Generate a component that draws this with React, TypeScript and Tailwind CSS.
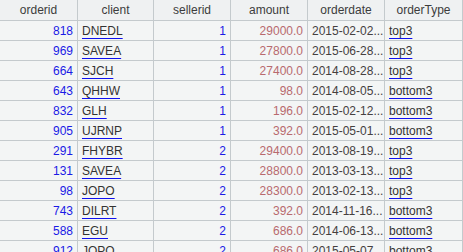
import React from 'react';

type Row = {
  orderid: number;
  client: string;
  sellerid: number;
  amount: string;
  orderdate: string;
  orderType: string;
};

const rows: Row[] = [
  { orderid: 818, client: 'DNEDL', sellerid: 1, amount: '29000.0', orderdate: '2015-02-02...', orderType: 'top3' },
  { orderid: 969, client: 'SAVEA', sellerid: 1, amount: '27800.0', orderdate: '2015-06-28...', orderType: 'top3' },
  { orderid: 664, client: 'SJCH', sellerid: 1, amount: '27400.0', orderdate: '2014-08-28...', orderType: 'top3' },
  { orderid: 643, client: 'QHHW', sellerid: 1, amount: '98.0', orderdate: '2014-08-05...', orderType: 'bottom3' },
  { orderid: 832, client: 'GLH', sellerid: 1, amount: '196.0', orderdate: '2015-02-12...', orderType: 'bottom3' },
  { orderid: 905, client: 'UJRNP', sellerid: 1, amount: '392.0', orderdate: '2015-05-01...', orderType: 'bottom3' },
  { orderid: 291, client: 'FHYBR', sellerid: 2, amount: '29400.0', orderdate: '2013-08-19...', orderType: 'top3' },
  { orderid: 131, client: 'SAVEA', sellerid: 2, amount: '28800.0', orderdate: '2013-03-13...', orderType: 'top3' },
  { orderid: 98, client: 'JOPO', sellerid: 2, amount: '28300.0', orderdate: '2013-02-13...', orderType: 'top3' },
  { orderid: 743, client: 'DILRT', sellerid: 2, amount: '392.0', orderdate: '2014-11-16...', orderType: 'bottom3' },
  { orderid: 588, client: 'EGU', sellerid: 2, amount: '686.0', orderdate: '2014-06-13...', orderType: 'bottom3' },
  { orderid: 912, client: 'JOPO', sellerid: 2, amount: '686.0', orderdate: '2015-05-07...', orderType: 'bottom3' },
];

const headers = ['orderid', 'client', 'sellerid', 'amount', 'orderdate', 'orderType'];

// column widths include the 1px right border
const grid = 'grid grid-cols-[78px_76px_77px_77px_77px_78px]';
const cell = 'border-r border-b border-[#c4cacd] flex items-center overflow-hidden whitespace-nowrap';

const Link: React.FC<{ text: string }> = ({ text }) => (
  <span className="underline decoration-[#1010f0] underline-offset-[3px] text-[#333333]">{text}</span>
);

export default function App() {
  return (
    <div className="w-[463px] h-[252px] overflow-hidden bg-[#f3f5f5] text-[12px] font-['Liberation_Sans',Arial,sans-serif] leading-none">
      <div className={`${grid} h-[21px] bg-[#eff1f2]`}>
        {headers.map((h) => (
          <div key={h} className={`${cell} justify-center text-[#3c3c3c]`}>
            {h}
          </div>
        ))}
      </div>
      {rows.map((r, i) => (
        <div key={i} className={`${grid} h-[20px]`}>
          <div className={`${cell} justify-end pr-[4px] text-[#1a1ae6]`}>{r.orderid}</div>
          <div className={`${cell} pl-[4px]`}>
            <Link text={r.client} />
          </div>
          <div className={`${cell} justify-end pr-[4px] text-[#1a1ae6]`}>{r.sellerid}</div>
          <div className={`${cell} justify-end pr-[4px] text-[#b86a6e]`}>{r.amount}</div>
          <div className={`${cell} pl-[4px] text-[#45403f]`}>{r.orderdate}</div>
          <div className={`${cell} pl-[4px]`}>
            <Link text={r.orderType} />
          </div>
        </div>
      ))}
    </div>
  );
}
